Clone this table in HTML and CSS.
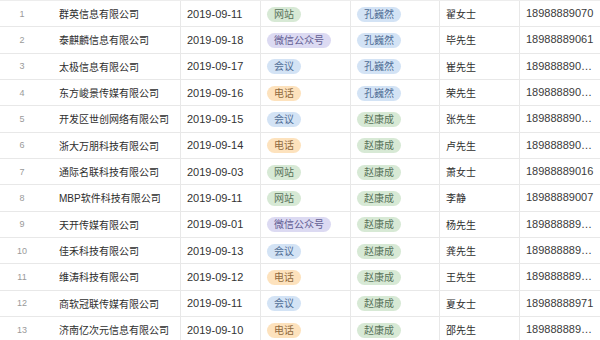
FILE: index.html
```html
<!DOCTYPE html>
<html lang="zh-CN">
<head>
<meta charset="utf-8">
<title>客户列表</title>
<link rel="stylesheet" href="styles.css">
</head>
<body>
<div class="table">
  <div class="row"><div class="c idx">1</div><div class="c co">群英信息有限公司</div><div class="c date">2019-09-11</div><div class="c tagc"><span class="tag green">网站</span></div><div class="c tagc"><span class="tag blue">孔巍然</span></div><div class="c name">翟女士</div><div class="c phone">18988889070</div></div>
  <div class="row"><div class="c idx">2</div><div class="c co">泰麒麟信息有限公司</div><div class="c date">2019-09-18</div><div class="c tagc"><span class="tag purple">微信公众号</span></div><div class="c tagc"><span class="tag blue">孔巍然</span></div><div class="c name">毕先生</div><div class="c phone">18988889061</div></div>
  <div class="row"><div class="c idx">3</div><div class="c co">太极信息有限公司</div><div class="c date">2019-09-17</div><div class="c tagc"><span class="tag blue">会议</span></div><div class="c tagc"><span class="tag blue">孔巍然</span></div><div class="c name">崔先生</div><div class="c phone">189888890531</div></div>
  <div class="row"><div class="c idx">4</div><div class="c co">东方峻景传媒有限公司</div><div class="c date">2019-09-16</div><div class="c tagc"><span class="tag orange">电话</span></div><div class="c tagc"><span class="tag blue">孔巍然</span></div><div class="c name">荣先生</div><div class="c phone">189888890472</div></div>
  <div class="row"><div class="c idx">5</div><div class="c co">开发区世创网络有限公司</div><div class="c date">2019-09-15</div><div class="c tagc"><span class="tag blue">会议</span></div><div class="c tagc"><span class="tag green">赵康成</span></div><div class="c name">张先生</div><div class="c phone">189888890363</div></div>
  <div class="row"><div class="c idx">6</div><div class="c co">浙大万朋科技有限公司</div><div class="c date">2019-09-14</div><div class="c tagc"><span class="tag orange">电话</span></div><div class="c tagc"><span class="tag green">赵康成</span></div><div class="c name">卢先生</div><div class="c phone">189888890254</div></div>
  <div class="row"><div class="c idx">7</div><div class="c co">通际名联科技有限公司</div><div class="c date">2019-09-03</div><div class="c tagc"><span class="tag green">网站</span></div><div class="c tagc"><span class="tag green">赵康成</span></div><div class="c name">萧女士</div><div class="c phone">18988889016</div></div>
  <div class="row"><div class="c idx">8</div><div class="c co">MBP软件科技有限公司</div><div class="c date">2019-09-11</div><div class="c tagc"><span class="tag green">网站</span></div><div class="c tagc"><span class="tag green">赵康成</span></div><div class="c name">李静</div><div class="c phone">18988889007</div></div>
  <div class="row"><div class="c idx">9</div><div class="c co">天开传媒有限公司</div><div class="c date">2019-09-01</div><div class="c tagc"><span class="tag purple">微信公众号</span></div><div class="c tagc"><span class="tag green">赵康成</span></div><div class="c name">杨先生</div><div class="c phone">189888889981</div></div>
  <div class="row"><div class="c idx">10</div><div class="c co">佳禾科技有限公司</div><div class="c date">2019-09-13</div><div class="c tagc"><span class="tag blue">会议</span></div><div class="c tagc"><span class="tag green">赵康成</span></div><div class="c name">龚先生</div><div class="c phone">189888889972</div></div>
  <div class="row"><div class="c idx">11</div><div class="c co">维涛科技有限公司</div><div class="c date">2019-09-12</div><div class="c tagc"><span class="tag orange">电话</span></div><div class="c tagc"><span class="tag green">赵康成</span></div><div class="c name">王先生</div><div class="c phone">189888889963</div></div>
  <div class="row"><div class="c idx">12</div><div class="c co">商软冠联传媒有限公司</div><div class="c date">2019-09-11</div><div class="c tagc"><span class="tag blue">会议</span></div><div class="c tagc"><span class="tag green">赵康成</span></div><div class="c name">夏女士</div><div class="c phone">18988888971</div></div>
  <div class="row"><div class="c idx">13</div><div class="c co">济南亿次元信息有限公司</div><div class="c date">2019-09-10</div><div class="c tagc"><span class="tag orange">电话</span></div><div class="c tagc"><span class="tag green">赵康成</span></div><div class="c name">邵先生</div><div class="c phone">189888889954</div></div>
</div>
</body>
</html>
```

FILE: styles.css
```css
* { box-sizing: border-box; }
html, body { margin: 0; padding: 0; background: #fff; }
body {
  font-family: "Liberation Sans", "Noto Sans CJK SC", sans-serif;
  color: #333;
  overflow: hidden;
  width: 600px;
  height: 340px;
}
.table {
  border-top: 1px solid #ededed;
}
.row {
  display: grid;
  grid-template-columns: 44px 136px 80px 90px 89px 80px 81px;
  height: 26.33px;
  border-bottom: 1px solid #e8e8e8;
}
.c {
  display: flex;
  align-items: center;
  padding: 0 6px;
  min-width: 0;
  white-space: nowrap;
  overflow: hidden;
}
.c + .c + .c { border-left: 1px solid #e8e8e8; }
.idx {
  justify-content: center;
  font-size: 9px;
  color: #9a9a9a;
  padding: 0;
}
.co {
  padding-left: 15px;
  font-size: 10px;
  color: #2e2e2e;
}
.date { font-size: 11px; color: #333; }
.name { font-size: 10px; color: #2e2e2e; }
.phone {
  display: block;
  line-height: 25.33px;
  font-size: 11px;
  color: #3a3a3a;
  text-overflow: ellipsis;
  padding-right: 4px;
}
.tag {
  display: inline-block;
  height: 15px;
  line-height: 15px;
  padding: 0 7px;
  border-radius: 8px;
  font-size: 10px;
  margin-top: 1px;
}
.green { background: #d7e9d5; color: #587259; }
.blue { background: #d3e3f5; color: #4f6c94; }
.purple { background: #dcdaf2; color: #625d92; }
.orange { background: #fde2bd; color: #8f6a3e; }
```
